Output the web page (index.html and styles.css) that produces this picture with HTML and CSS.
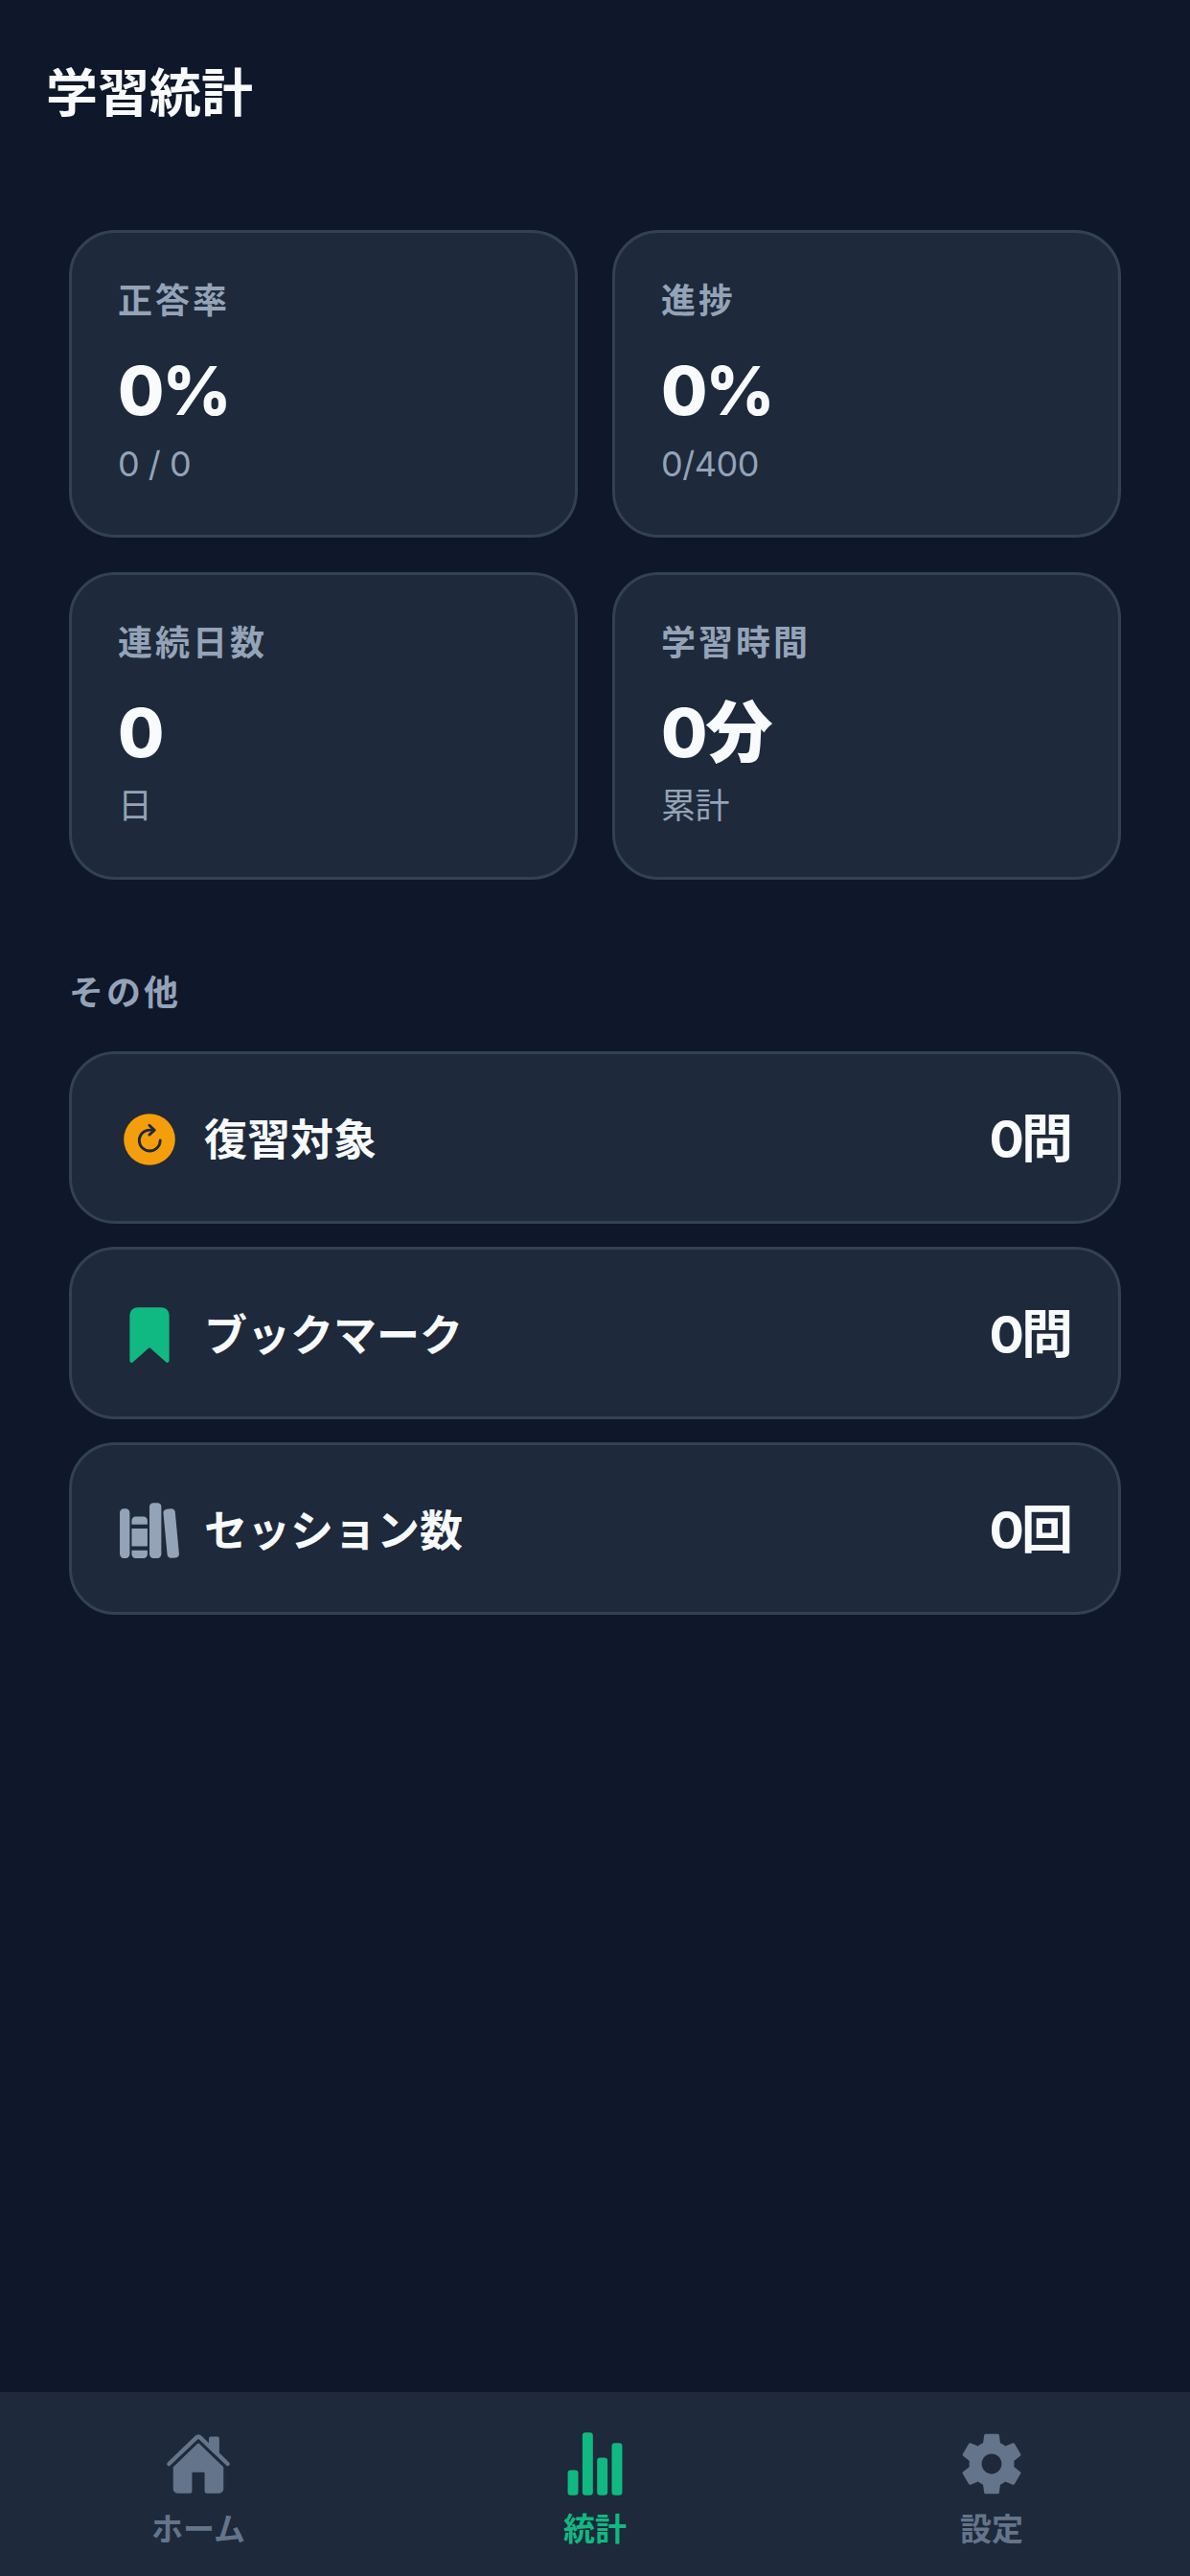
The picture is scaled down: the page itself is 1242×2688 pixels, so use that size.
FILE: index.html
```html
<!DOCTYPE html>
<html lang="ja">
<head>
  <meta charset="UTF-8">
  <title>学習統計</title>
  <link rel="stylesheet" href="styles.css">
</head>
<body>
  <header class="page-header">
    <h1>学習統計</h1>
  </header>

  <main class="content">
    <section class="stat-grid">
      <div class="stat-card">
        <div class="stat-label">正答率</div>
        <div class="stat-value">0%</div>
        <div class="stat-sub">0 / 0</div>
      </div>
      <div class="stat-card">
        <div class="stat-label">進捗</div>
        <div class="stat-value">0%</div>
        <div class="stat-sub">0/400</div>
      </div>
      <div class="stat-card">
        <div class="stat-label">連続日数</div>
        <div class="stat-value">0</div>
        <div class="stat-sub">日</div>
      </div>
      <div class="stat-card">
        <div class="stat-label">学習時間</div>
        <div class="stat-value">0分</div>
        <div class="stat-sub">累計</div>
      </div>
    </section>

    <h2 class="section-title">その他</h2>
    <section class="other-list">
      <div class="other-row">
        <svg class="row-icon" viewBox="0 0 512 512">
          <circle cx="256" cy="256" r="208" fill="#f59e0b"/>
          <path d="M343 264a85 85 0 1 1-85-85h30" fill="none" stroke="#1e293b" stroke-width="22" stroke-linecap="round"/>
          <path d="M255 142l42 38-42 38" fill="none" stroke="#1e293b" stroke-width="22" stroke-linecap="round" stroke-linejoin="round"/>
        </svg>
        <span class="row-name">復習対象</span>
        <span class="row-value">0問</span>
      </div>
      <div class="other-row">
        <svg class="row-icon" viewBox="0 0 512 512" fill="#10b981">
          <path d="M400 480a16 16 0 01-10.63-4L256 357.41 122.63 476A16 16 0 0196 464V96a64 64 0 0164-64h192a64 64 0 0164 64v368a16 16 0 01-16 16z"/>
        </svg>
        <span class="row-name">ブックマーク</span>
        <span class="row-value">0問</span>
      </div>
      <div class="other-row">
        <svg class="row-icon" viewBox="0 0 512 512" fill="#94a3b8">
          <path d="M64 480H48a32 32 0 01-32-32V112a32 32 0 0132-32h16a32 32 0 0132 32v336a32 32 0 01-32 32zM240 176a32 32 0 00-32-32h-64a32 32 0 00-32 32v28a4 4 0 004 4h120a4 4 0 004-4zM112 448a32 32 0 0032 32h64a32 32 0 0032-32v-30a2 2 0 00-2-2H114a2 2 0 00-2 2z"/>
          <rect x="112" y="240" width="128" height="144" rx="2"/>
          <path d="M320 480h-32a32 32 0 01-32-32V64a32 32 0 0132-32h32a32 32 0 0132 32v384a32 32 0 01-32 32zM495.89 445.45l-32.23-340c-1.48-15.65-16.94-27-34.53-25.31l-31.85 3c-17.59 1.67-30.65 15.71-29.17 31.36l32.23 340c1.48 15.65 16.94 27 34.53 25.31l31.85-3c17.59-1.67 30.65-15.71 29.17-31.36z"/>
        </svg>
        <span class="row-name">セッション数</span>
        <span class="row-value">0回</span>
      </div>
    </section>
  </main>

  <nav class="tab-bar">
    <div class="tab">
      <svg class="tab-icon" viewBox="0 0 512 512" fill="#64748b">
        <path d="M261.56 101.28a8 8 0 00-11.06 0L66.4 277.15a8 8 0 00-2.47 5.79L63.9 448a32 32 0 0032 32H192a16 16 0 0016-16V328a8 8 0 018-8h80a8 8 0 018 8v136a16 16 0 0016 16h96.06a32 32 0 0032-32V282.94a8 8 0 00-2.47-5.79z"/>
        <path d="M490.91 244.15l-74.8-71.56V64a16 16 0 00-16-16h-48a16 16 0 00-16 16v32l-57.92-55.38C272.77 35.14 264.71 32 256 32c-8.68 0-16.72 3.14-22.14 8.63l-212.7 203.5c-6.22 6-7 15.87-1.34 22.37A16 16 0 0043 267.56L250.5 69.28a8 8 0 0111.06 0l207.52 198.28a16 16 0 0022.59-.44c6.14-6.36 5.63-16.86-.76-22.97z"/>
      </svg>
      <span class="tab-label">ホーム</span>
    </div>
    <div class="tab tab-active">
      <svg class="tab-icon" viewBox="0 0 512 512" fill="#10b981">
        <path d="M104 496H72a24 24 0 01-24-24V328a24 24 0 0124-24h32a24 24 0 0124 24v144a24 24 0 01-24 24zM328 496h-32a24 24 0 01-24-24V232a24 24 0 0124-24h32a24 24 0 0124 24v240a24 24 0 01-24 24zM440 496h-32a24 24 0 01-24-24V120a24 24 0 0124-24h32a24 24 0 0124 24v352a24 24 0 01-24 24zM216 496h-32a24 24 0 01-24-24V40a24 24 0 0124-24h32a24 24 0 0124 24v432a24 24 0 01-24 24z"/>
      </svg>
      <span class="tab-label">統計</span>
    </div>
    <div class="tab">
      <svg class="tab-icon" viewBox="1.25 1.25 21.5 21.5" fill="#64748b">
        <path fill-rule="evenodd" d="M19.14 12.94c.04-.3.06-.61.06-.94 0-.32-.02-.64-.07-.94l2.03-1.58c.18-.14.23-.41.12-.61l-1.92-3.32c-.12-.22-.37-.29-.59-.22l-2.39.96c-.5-.38-1.03-.7-1.62-.94l-.36-2.54c-.04-.24-.24-.41-.48-.41h-3.84c-.24 0-.43.17-.47.41l-.36 2.54c-.59.24-1.13.57-1.62.94l-2.39-.96c-.22-.08-.47 0-.59.22L2.74 8.87c-.12.21-.08.47.12.61l2.03 1.58c-.05.3-.09.63-.09.94s.02.64.07.94l-2.03 1.58c-.18.14-.23.41-.12.61l1.92 3.32c.12.22.37.29.59.22l2.39-.96c.5.38 1.03.7 1.62.94l.36 2.54c.05.24.24.41.48.41h3.84c.24 0 .44-.17.47-.41l.36-2.54c.59-.24 1.13-.56 1.62-.94l2.39.96c.22.08.47 0 .59-.22l1.92-3.32c.12-.22.07-.47-.12-.61l-2.01-1.58zM12 15.2c-1.76 0-3.2-1.44-3.2-3.2s1.44-3.2 3.2-3.2 3.2 1.44 3.2 3.2-1.44 3.2-3.2 3.2z"/>
      </svg>
      <span class="tab-label">設定</span>
    </div>
  </nav>
</body>
</html>
```

FILE: styles.css
```css
body {
  margin: 0;
  width: 1242px;
  height: 2688px;
  display: flex;
  flex-direction: column;
  background-color: #0f172a;
  color: #f8fafc;
  font-family: Inter, "Noto Sans CJK JP", sans-serif;
}

.page-header {
  padding: 62px 48px 0;
}

h1 {
  margin: 0;
  font-size: 54px;
  line-height: 72px;
  font-weight: 700;
}

.content {
  flex: 1;
  padding: 106px 72px 0;
}

.stat-grid {
  display: grid;
  grid-template-columns: 1fr 1fr;
  gap: 36px;
}

.stat-card {
  height: 321px;
  box-sizing: border-box;
  padding: 48px;
  background-color: #1e293b;
  border: 3px solid #334155;
  border-radius: 48px;
}

.stat-label {
  font-size: 36px;
  line-height: 46px;
  font-weight: 700;
  letter-spacing: 3px;
  color: #94a3b8;
}

.stat-value {
  margin-top: 29px;
  font-size: 70px;
  line-height: 84px;
  font-weight: 800;
  letter-spacing: -2px;
}

.stat-sub {
  margin-top: 12px;
  font-size: 36px;
  line-height: 44px;
  letter-spacing: -0.5px;
  color: #94a3b8;
}

.section-title {
  margin: 96px 0 0;
  font-size: 36px;
  line-height: 44px;
  font-weight: 700;
  letter-spacing: 3px;
  color: #94a3b8;
}

.other-list {
  display: flex;
  flex-direction: column;
  gap: 24px;
  margin-top: 39px;
}

.other-row {
  display: flex;
  align-items: center;
  height: 180px;
  box-sizing: border-box;
  padding: 0 48px;
  background-color: #1e293b;
  border: 3px solid #334155;
  border-radius: 48px;
}

.row-icon {
  width: 66px;
  height: 66px;
  margin: 3px 24px 0 0;
}

.row-name {
  flex: 1;
  margin-bottom: 2px;
  font-size: 45px;
  font-weight: 700;
}

.row-value {
  margin: 0 2px 6px 0;
  font-size: 54px;
  font-weight: 700;
  letter-spacing: -3px;
}

.tab-bar {
  display: grid;
  grid-template-columns: repeat(3, 1fr);
  height: 192px;
  background-color: #1e293b;
}

.tab {
  display: flex;
  flex-direction: column;
  align-items: center;
  padding-top: 40px;
  color: #64748b;
}

.tab-active {
  color: #10b981;
}

.tab-icon {
  width: 70px;
  height: 70px;
}

.tab-label {
  margin-top: 11px;
  font-size: 33px;
  line-height: 44px;
  font-weight: 700;
}
```
